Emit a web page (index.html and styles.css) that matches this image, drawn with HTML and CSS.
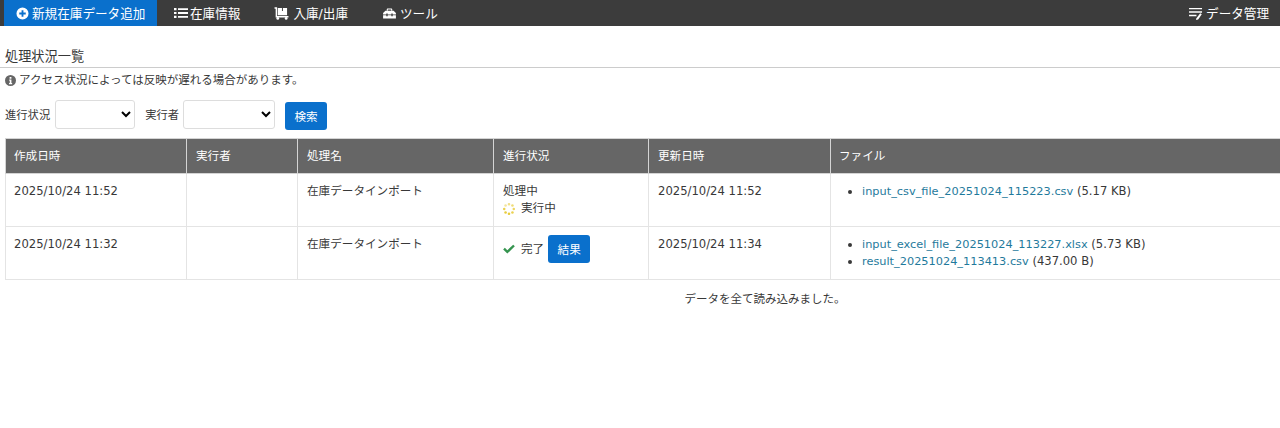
FILE: index.html
```html
<!DOCTYPE html>
<html lang="ja">

<head>
    <meta charset="UTF-8">
    <title>処理状況一覧</title>
    <link rel="stylesheet" href="styles.css">
</head>

<body>
    <nav class="navbar">
        <a class="nav_item nav_active">
            <svg class="nav_icon" viewBox="0 0 14 14" width="13" height="13">
                <path fill="#fff" fill-rule="evenodd" d="M7 .5a6.500 6.500 0 1 0 0 13 6.500 6.500 0 0 0 0-13zM6 3.500h2V6h2.500v2H8v2.500H6V8H3.500V6H6z" />
            </svg>
            新規在庫データ追加
        </a>
        <a class="nav_item nav_list">
            <svg class="nav_icon" viewBox="0 0 14 12" width="14" height="12">
                <path fill="#fff" d="M0 1h2.500v2.200H0zM4 1.200h10v1.800H4zM0 4.900h2.500v2.200H0zM4 5.100h10v1.800H4zM0 8.800h2.500V11H0zM4 9h10v1.800H4z" />
            </svg>
            在庫情報
        </a>
        <a class="nav_item nav_stock">
            <svg class="nav_icon" viewBox="0 0 16 14" width="15" height="13">
                <path fill="none" stroke="#fff" stroke-width="1.600" d="M.5 1H2.500V10.500H15.500" />
                <path fill="#fff" d="M4 1h4.500v3.200h1V1H14v8H4z" />
                <circle fill="#fff" cx="4" cy="12.300" r="1.500" />
                <circle fill="#fff" cx="13" cy="12.300" r="1.500" />
            </svg>
            入庫/出庫
        </a>
        <a class="nav_item nav_tool">
            <svg class="nav_icon" viewBox="0 0 14 12" width="13" height="11">
                <path fill="#fff" d="M4 3V1.500C4 .8 4.500.5 5 .5h4c.5 0 1 .3 1 1V3H8.800V1.700H5.200V3z" />
                <path fill="#fff" d="M2.500 3h9L14 5.500V7h-3.500V6h-1.500v1H5V6H3.500v1H0V5.500zM0 8h3.500v1H5V8h4v1h1.500V8H14v3.500H0z" />
            </svg>
            ツール
        </a>
        <a class="nav_item nav_right">
            <svg class="nav_icon" viewBox="0 0 15 14" width="14" height="13">
                <path fill="#fff" d="M0 1h14v1.500H0zM0 4.700h14v1.500H0zM0 8.400h8v1.500H0z" />
                <path fill="#fff" d="M12 6.800l1.700 1L9.800 13.500l-2.300.5.500-1.900z" />
            </svg>
            データ管理
        </a>
    </nav>

    <main class="content">
        <h1 class="page_title">処理状況一覧</h1>
        <p class="notice">
            <svg class="notice_icon" viewBox="0 0 12 12" width="11" height="11">
                <path fill="#666" fill-rule="evenodd" d="M6 0a6 6 0 1 0 0 12A6 6 0 0 0 6 0zM5 2.200h2v1.800H5zM4.600 5h2.400v3.600h.8V10H4.400V8.600h.8V6.300h-.6z" />
            </svg>
            アクセス状況によっては反映が遅れる場合があります。
        </p>

        <form class="search_form">
            <label class="search_label">進行状況</label>
            <select class="search_select select_status"></select>
            <label class="search_label label_user">実行者</label>
            <select class="search_select select_user"></select>
            <button type="button" class="btn btn_search">検索</button>
        </form>

        <table class="job_table">
            <thead>
                <tr>
                    <th class="col_created">作成日時</th>
                    <th class="col_user">実行者</th>
                    <th class="col_name">処理名</th>
                    <th class="col_status">進行状況</th>
                    <th class="col_updated">更新日時</th>
                    <th class="col_file">ファイル</th>
                </tr>
            </thead>
            <tbody>
                <tr>
                    <td>2025/10/24 11:52</td>
                    <td></td>
                    <td>在庫データインポート</td>
                    <td>
                        <div>処理中</div>
                        <div class="status_line">
                            <svg class="status_icon" viewBox="0.5 0.5 15 15" width="12" height="12">
                                <g fill="#e8cc3c">
                                    <circle cx="8" cy="2" r="1.600" opacity=".6" />
                                    <circle cx="12.300" cy="3.700" r="1.600" opacity=".7" />
                                    <circle cx="14" cy="8" r="1.600" opacity=".8" />
                                    <circle cx="12.300" cy="12.300" r="1.600" opacity=".9" />
                                    <circle cx="8" cy="14" r="1.600" />
                                    <circle cx="3.700" cy="12.300" r="1.600" />
                                    <circle cx="2" cy="8" r="1.600" opacity=".9" />
                                    <circle cx="3.700" cy="3.700" r="1.600" opacity=".5" />
                                </g>
                            </svg>
                            実行中
                        </div>
                    </td>
                    <td>2025/10/24 11:52</td>
                    <td>
                        <ul class="file_list">
                            <li><a class="file_link">input_csv_file_20251024_115223.csv</a> (5.17 KB)</li>
                        </ul>
                    </td>
                </tr>
                <tr>
                    <td>2025/10/24 11:32</td>
                    <td></td>
                    <td>在庫データインポート</td>
                    <td>
                        <div class="status_line status_done">
                            <svg class="status_icon" viewBox="0 0 14 12" width="12" height="10">
                                <path fill="#35944f" d="M0 6.500l2-2 3 3L12 .8l2 2-9 8.700z" />
                            </svg>
                            完了
                            <button type="button" class="btn btn_result">結果</button>
                        </div>
                    </td>
                    <td>2025/10/24 11:34</td>
                    <td>
                        <ul class="file_list">
                            <li><a class="file_link">input_excel_file_20251024_113227.xlsx</a> (5.73 KB)</li>
                            <li><a class="file_link">result_20251024_113413.csv</a> (437.00 B)</li>
                        </ul>
                    </td>
                </tr>
            </tbody>
        </table>
        <p class="load_message">データを全て読み込みました。</p>
    </main>
</body>

</html>
```

FILE: styles.css
```css
html,
body {
    margin: 0;
    padding: 0;
}

body {
    background-color: #fff;
    color: #383838;
    font-family: "DejaVu Sans", "Noto Sans CJK JP", sans-serif;
    font-size: 11.6px;
}

.navbar {
    display: flex;
    align-items: center;
    height: 26px;
    padding-left: 4px;
    background-color: #3c3c3c;
}

.nav_item {
    display: flex;
    align-items: center;
    height: 26px;
    padding-bottom: 2px;
    box-sizing: border-box;
    color: #fff;
    font-size: 12.6px;
}

.nav_icon {
    margin-top: 2px;
    margin-right: 3px;
}

.nav_active {
    width: 153px;
    padding-left: 12px;
    background-color: #0a70cc;
}

.nav_list {
    margin-left: 17px;
}

.nav_list .nav_icon {
    margin-right: 2px;
}

.nav_stock {
    margin-left: 34px;
}

.nav_stock .nav_icon,
.nav_tool .nav_icon {
    margin-right: 4px;
}

.nav_tool {
    margin-left: 35px;
}

.nav_right {
    margin-left: auto;
    margin-right: 11px;
}

.page_title {
    margin: 0;
    padding: 22px 0 1px 5px;
    border-bottom: 1px solid #ccc;
    font-size: 13.2px;
    font-weight: normal;
    line-height: 18px;
}

.notice {
    display: flex;
    align-items: center;
    margin: 4px 0 0 5px;
    line-height: 16px;
    font-size: 11.5px;
}

.notice_icon {
    margin-right: 3px;
}

.search_form {
    display: flex;
    align-items: flex-start;
    margin: 12px 0 0 5px;
    height: 30px;
}

.search_label {
    line-height: 31px;
    margin-right: 5px;
    font-size: 11.3px;
}

.label_user {
    margin-left: 10px;
    margin-right: 4px;
}

.search_select {
    height: 29px;
    padding: 0 6px;
    border: 1px solid #ddd;
    border-radius: 3px;
    background-color: #fff;
}

.select_status {
    width: 80px;
}

.select_user {
    width: 92px;
}

.btn {
    border: 0;
    border-radius: 3px;
    background-color: #0a70cc;
    color: #fff;
    font-family: inherit;
    font-size: 11.6px;
}

.btn_search {
    width: 42px;
    height: 28px;
    margin: 2px 0 0 10px;
}

.job_table {
    width: 1275px;
    margin: 8px 0 0 5px;
    border-collapse: collapse;
    table-layout: fixed;
}

.job_table th {
    height: 35px;
    padding: 0 9px 3px;
    box-sizing: border-box;
    border: 1px solid #d4d4d4;
    background-color: #666;
    color: #fff;
    font-weight: normal;
    text-align: left;
}

.job_table td {
    height: 34px;
    padding: 9px;
    border: 1px solid #e4e4e4;
    vertical-align: top;
    line-height: 17px;
}

.job_table th:first-child,
.job_table td:first-child {
    padding-left: 8px;
}

.job_table th:last-child,
.job_table td:last-child {
    border-right: 0;
}

.job_table th:last-child {
    padding-left: 8px;
}

.col_created {
    width: 181px;
}

.col_user {
    width: 111px;
}

.col_name {
    width: 196px;
}

.col_status {
    width: 155px;
}

.col_updated {
    width: 182px;
}

.status_line {
    display: flex;
    align-items: center;
}

.status_icon {
    margin-right: 6px;
}

.status_done {
    height: 28px;
    margin-top: -1px;
}

.btn_result {
    width: 42px;
    height: 28px;
    margin-left: 4px;
}

.file_list {
    margin: 0;
    padding-left: 22px;
    height: 34px;
}

.file_link {
    color: #1f7a9c;
    font-size: 11.33px;
}

.load_message {
    margin: 11px 0 0;
    padding-left: 250px;
    text-align: center;
    line-height: 17px;
    font-size: 11.5px;
}
```
